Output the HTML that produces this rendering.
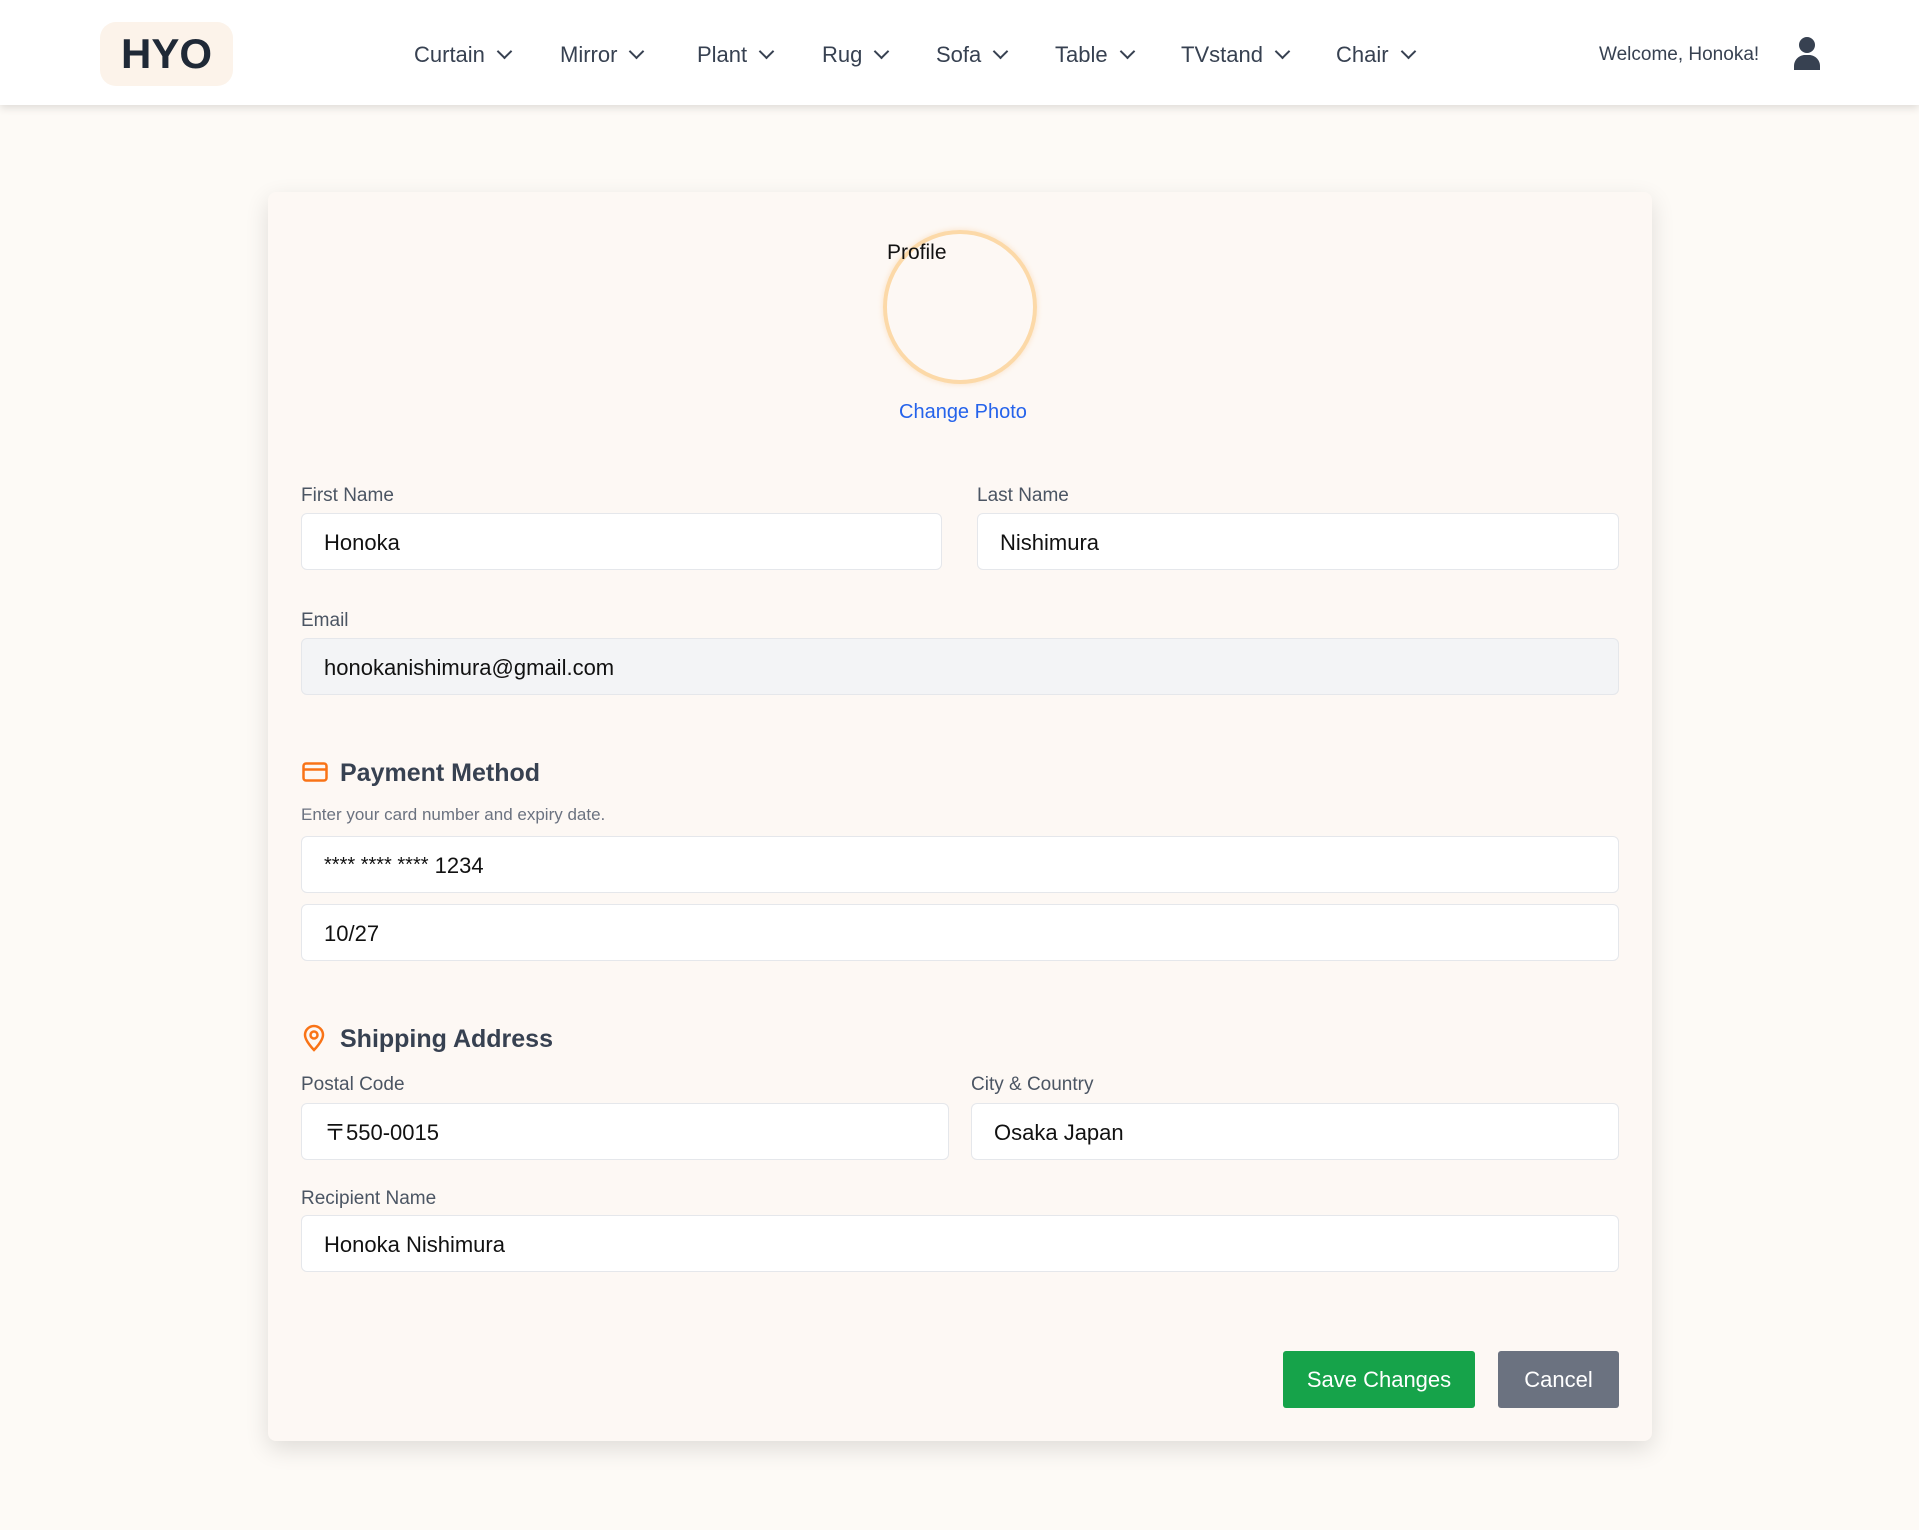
<!DOCTYPE html>
<html><head><meta charset="utf-8"><style>
*{box-sizing:border-box;margin:0;padding:0}
body{width:1919px;height:1530px;background:#fdfaf6;font-family:"Liberation Sans",sans-serif;color:#111827;position:relative;overflow:hidden}
.nav{position:absolute;left:0;top:0;width:1919px;height:105px;background:#fff;box-shadow:0 3px 8px rgba(0,0,0,.12)}
.logo{position:absolute;left:100px;top:22px;width:133px;height:64px;background:#fcf3ea;border-radius:16px;font-weight:bold;font-size:42px;color:#1f2937;text-align:center;line-height:64px}
.menu{position:absolute;top:2px;height:105px;display:flex;align-items:center;font-size:22px;color:#374151}
.menu span{position:absolute;white-space:nowrap}
.chev{display:inline-block;width:11px;height:11px;border-right:2.5px solid #374151;border-bottom:2.5px solid #374151;transform:rotate(45deg);margin-left:14px;position:relative;top:-5px}
.welcome{position:absolute;left:1599px;top:44px;font-size:19px;color:#374151}
.card{position:absolute;left:268px;top:192px;width:1384px;height:1249px;background:#fdf8f4;border-radius:8px;box-shadow:0 8px 24px rgba(0,0,0,.12)}
.abs{position:absolute}
.lbl{position:absolute;font-size:19px;color:#4b5563}
.inp{position:absolute;height:57px;background:#fff;border:1px solid #e5e7eb;border-radius:6px;font-size:22px;padding-left:22px;line-height:57px;color:#111}
h2{position:absolute;font-size:25px;font-weight:bold;color:#374151}
.btn{position:absolute;height:57px;color:#fff;font-size:22px;text-align:center;line-height:57px;border-radius:3px}
</style></head><body>
<div class="nav">
<div class="logo">HYO</div>
<div class="menu">
<span style="left:414px">Curtain<i class="chev"></i></span>
<span style="left:560px">Mirror<i class="chev"></i></span>
<span style="left:697px">Plant<i class="chev"></i></span>
<span style="left:822px">Rug<i class="chev"></i></span>
<span style="left:936px">Sofa<i class="chev"></i></span>
<span style="left:1055px">Table<i class="chev"></i></span>
<span style="left:1181px">TVstand<i class="chev"></i></span>
<span style="left:1336px">Chair<i class="chev"></i></span>
</div>
<div class="welcome">Welcome, Honoka!</div>
<svg class="abs" style="left:1793px;top:36px" width="28" height="34" viewBox="0 0 28 34"><circle cx="14" cy="9" r="8" fill="#374151"/><path d="M1 34v-4c0-6 5-11 11-11h4c6 0 11 5 11 11v4z" fill="#374151"/></svg>
</div>
<div class="card">
<div class="abs" style="left:615px;top:38px;width:154px;height:154px;border-radius:50%;border:4px solid #fcd9a8;box-shadow:0 0 6px rgba(251,191,120,.4)"></div>
<div class="abs" style="left:619px;top:49px;font-size:21px;color:#111">Profile</div>
<div class="abs" style="left:631px;top:209px;font-size:20px;color:#2563eb">Change Photo</div>
<div class="lbl" style="left:33px;top:293px">First Name</div>
<div class="inp" style="left:33px;top:321px;width:641px">Honoka</div>
<div class="lbl" style="left:709px;top:293px">Last Name</div>
<div class="inp" style="left:709px;top:321px;width:642px">Nishimura</div>
<div class="lbl" style="left:33px;top:418px">Email</div>
<div class="inp" style="left:33px;top:446px;width:1318px;background:#f3f4f6">honokanishimura@gmail.com</div>
<svg class="abs" style="left:34px;top:570px" width="26" height="20" viewBox="0 0 26 20"><rect x="1.5" y="1.5" width="23" height="17" rx="2.5" fill="none" stroke="#f97316" stroke-width="2.5"/><line x1="1.5" y1="7.5" x2="24.5" y2="7.5" stroke="#f97316" stroke-width="2.5"/></svg>
<h2 style="left:72px;top:567px">Payment Method</h2>
<div class="abs" style="left:33px;top:613px;font-size:17px;color:#6b7280">Enter your card number and expiry date.</div>
<div class="inp" style="left:33px;top:644px;width:1318px"><span style="font-size:20px;position:relative;top:-2px">**** **** ****</span> 1234</div>
<div class="inp" style="left:33px;top:712px;width:1318px">10/27</div>
<svg class="abs" style="left:34px;top:832px" width="24" height="28" viewBox="0 0 24 28"><path d="M12 26s-9-9-9-15a9 9 0 0 1 18 0c0 6-9 15-9 15z" fill="none" stroke="#f97316" stroke-width="2.5"/><circle cx="12" cy="11" r="3.5" fill="none" stroke="#f97316" stroke-width="2.5"/></svg>
<h2 style="left:72px;top:833px">Shipping Address</h2>
<div class="lbl" style="left:33px;top:882px">Postal Code</div>
<div class="inp" style="left:33px;top:911px;width:648px">〒550-0015</div>
<div class="lbl" style="left:703px;top:882px">City &amp; Country</div>
<div class="inp" style="left:703px;top:911px;width:648px">Osaka Japan</div>
<div class="lbl" style="left:33px;top:996px">Recipient Name</div>
<div class="inp" style="left:33px;top:1023px;width:1318px">Honoka Nishimura</div>
<div class="btn" style="left:1015px;top:1159px;width:192px;background:#16a34a">Save Changes</div>
<div class="btn" style="left:1230px;top:1159px;width:121px;background:#6b7280">Cancel</div>
</div>
</body></html>
